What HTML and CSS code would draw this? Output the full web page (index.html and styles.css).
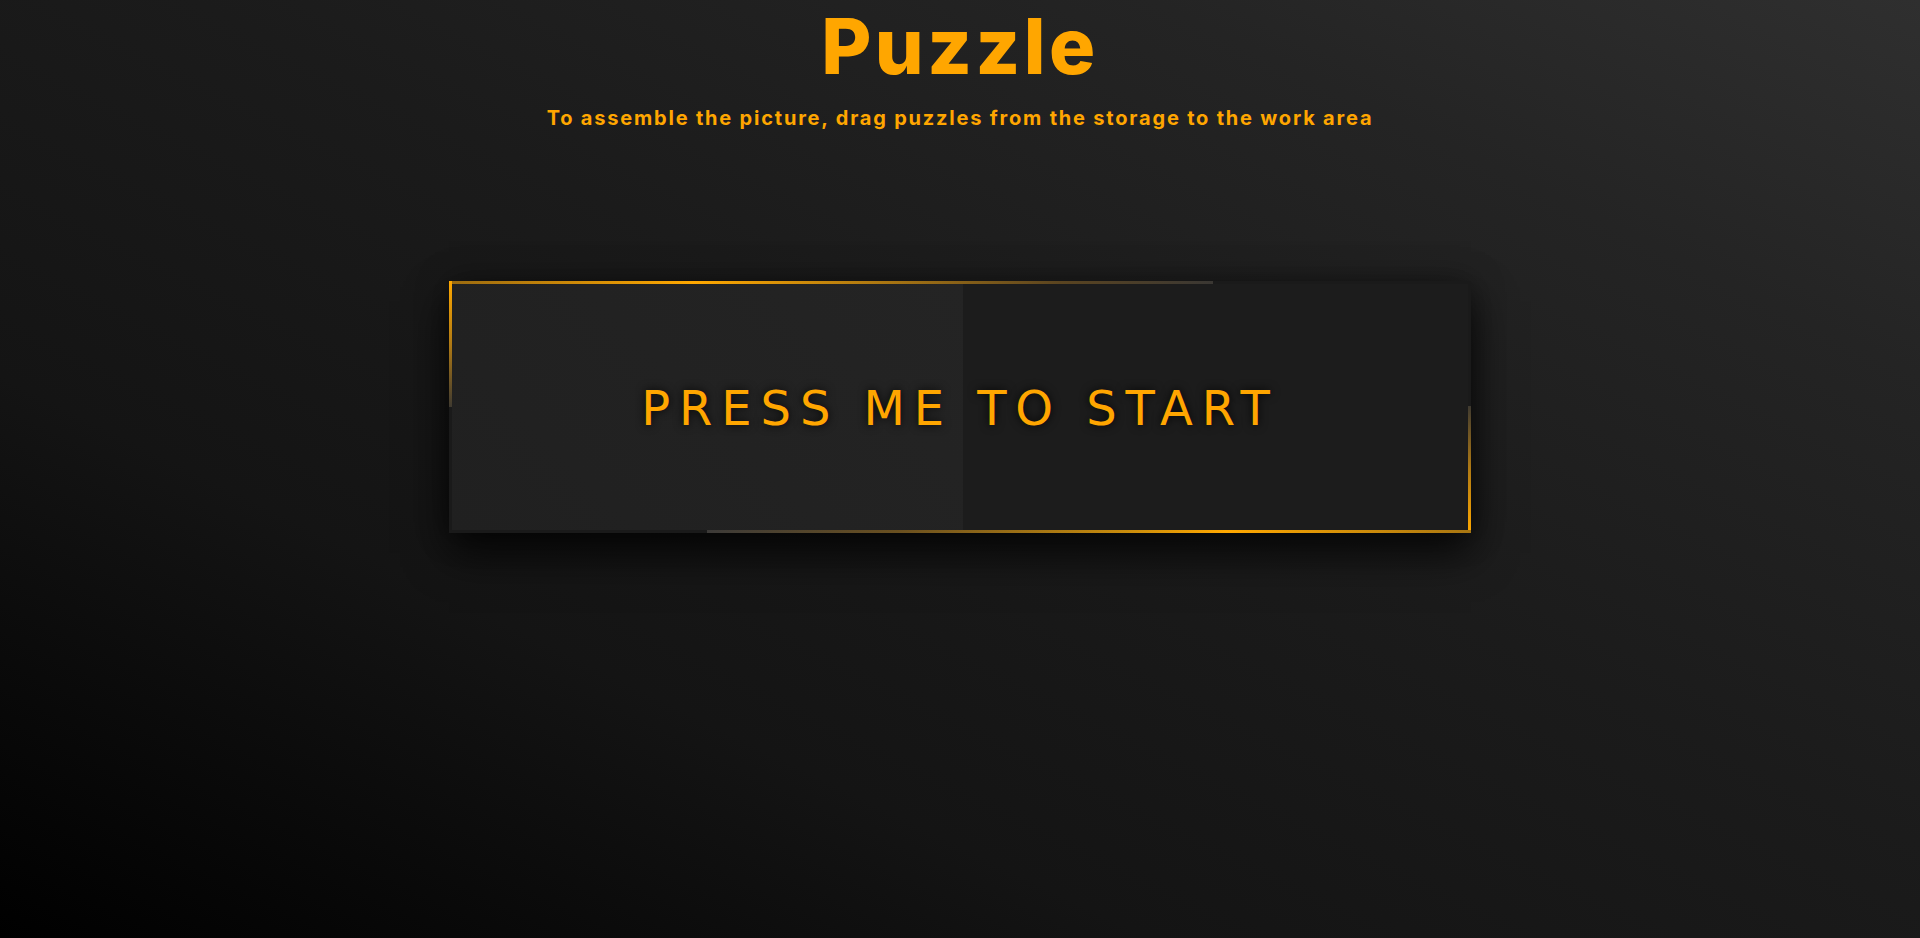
FILE: index.html
```html
<!DOCTYPE html>
<html lang="en">
<head>
<meta charset="utf-8">
<title>Puzzle</title>
<link rel="stylesheet" href="styles.css">
</head>
<body>
<main class="page">
  <header class="head">
    <h1 class="title">Puzzle</h1>
    <p class="subtitle">To assemble the picture, drag puzzles from the storage to the work area</p>
  </header>
  <button class="start" type="button">
    <span class="half"></span>
    <span class="line line-top"></span>
    <span class="line line-right"></span>
    <span class="line line-bottom"></span>
    <span class="line line-left"></span>
    <span class="label">PRESS ME TO START</span>
  </button>
</main>
</body>
</html>
```
FILE: styles.css
```css
* { box-sizing: border-box; }
html, body { margin: 0; padding: 0; height: 100%; }
body {
  background: linear-gradient(to top right, #000 0%, #141414 30%, #1b1b1b 55%, #242424 80%, #2f2f2f 100%);
  overflow: hidden;
}
.page {
  height: 938px;
  display: flex;
  flex-direction: column;
  align-items: center;
}
.head {
  display: flex;
  flex-direction: column;
  align-items: center;
}
.title {
  margin: 6px 0 0;
  font-family: Inter, "Liberation Sans", sans-serif;
  font-weight: 800;
  font-size: 77px;
  line-height: 80px;
  letter-spacing: 3.5px;
  color: #ffa600;
}
.subtitle {
  margin: 20px 0 0;
  font-family: Inter, "Liberation Sans", sans-serif;
  font-weight: 700;
  font-size: 20px;
  line-height: 24px;
  letter-spacing: 1.8px;
  color: #ffa600;
}
.start {
  position: relative;
  margin-top: 151px;
  width: 1022px;
  height: 252px;
  padding: 0;
  border: 3px solid #1a1a1a;
  background: #1c1c1c;
  box-shadow: 0 20px 40px rgba(0, 0, 0, 0.75), 0 0 30px rgba(0, 0, 0, 0.35);
  display: flex;
  align-items: center;
  justify-content: center;
  cursor: pointer;
}
.half {
  position: absolute;
  left: 0;
  top: 0;
  bottom: 0;
  width: 511px;
  background: linear-gradient(45deg, #202020, #242424);
}
.label {
  position: relative;
  font-family: "DejaVu Sans", sans-serif;
  font-size: 48px;
  letter-spacing: 8.9px;
  color: #ffa600;
  text-shadow: 0 0 10px rgba(0, 0, 0, 0.9);
  line-height: 1;
  padding-top: 2px;
}
.line { position: absolute; display: block; }
.line-top {
  left: -3px;
  top: -3px;
  width: 764px;
  height: 3px;
  background: linear-gradient(90deg, #9a6a10 0%, #ffa800 32%, #b17a10 55%, #5a4420 80%, #3a3733 100%);
}
.line-left {
  left: -3px;
  top: -3px;
  width: 3px;
  height: 126px;
  background: linear-gradient(180deg, #ffa800 0%, #b07a14 50%, #3f3a30 100%);
}
.line-bottom {
  right: -3px;
  bottom: -3px;
  width: 764px;
  height: 3px;
  background: linear-gradient(90deg, #3c3a38 0%, #6a5020 25%, #c98c0c 55%, #ffa800 68%, #a87612 100%);
}
.line-right {
  right: -3px;
  bottom: -3px;
  width: 3px;
  height: 127px;
  background: linear-gradient(0deg, #ffa800 0%, #b07a14 50%, #3f3a30 100%);
}
```
